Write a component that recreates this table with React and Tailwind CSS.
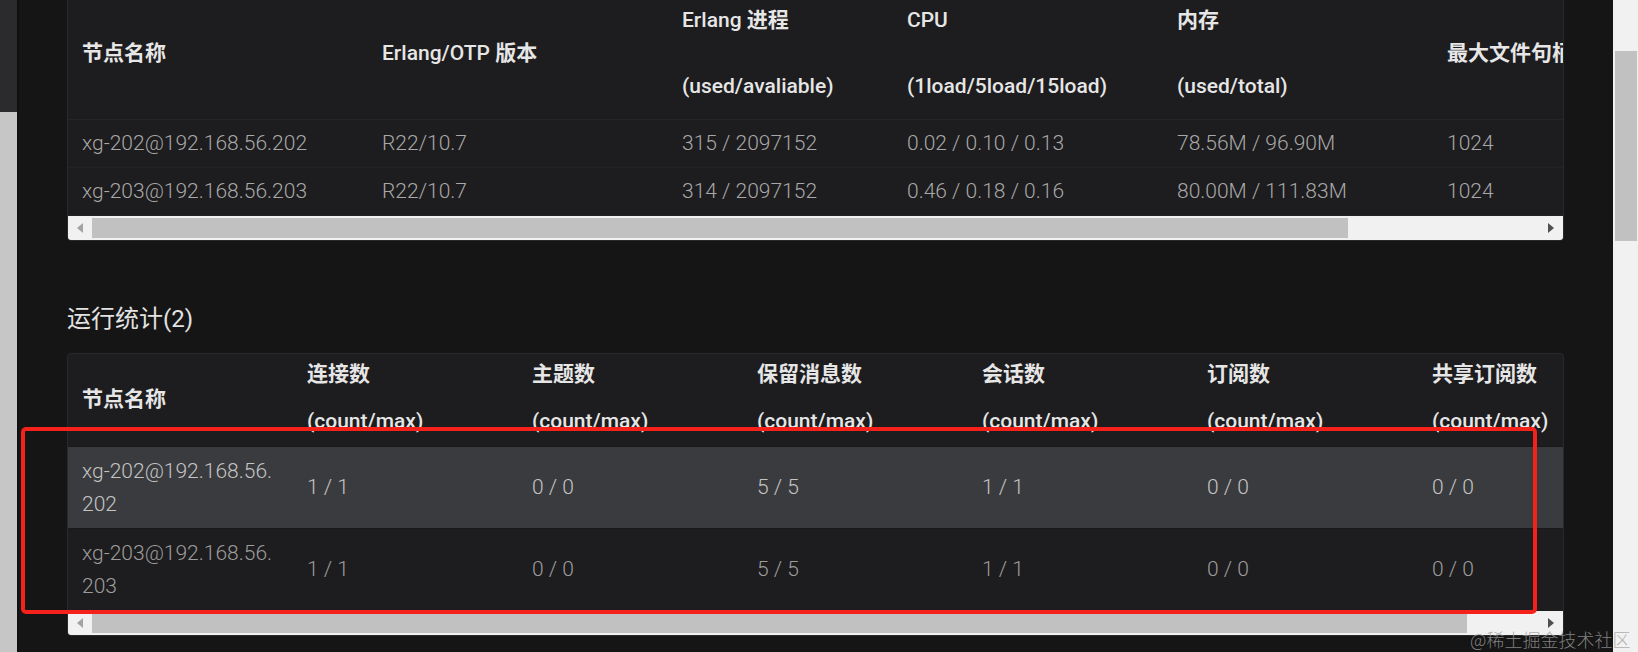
const font = "font-['Roboto','Noto_Sans_CJK_SC',sans-serif]";

function Cjk({ children }) {
  return <span className="font-bold">{children}</span>;
}

function Scrollbar({ thumb }) {
  return (
    <div className="flex h-[24px] items-center bg-[#f1f1f1]">
      <div className="flex w-[24px] shrink-0 justify-center">
        <span className="h-0 w-0 border-y-[5px] border-r-[6px] border-y-transparent border-r-[#a3a3a3]" />
      </div>
      <div className="min-w-0 flex-1">
        <div className={`h-[20px] bg-[#c1c1c1] ${thumb}`} />
      </div>
      <div className="flex w-[24px] shrink-0 justify-center">
        <span className="h-0 w-0 border-y-[5px] border-l-[6px] border-y-transparent border-l-[#505050]" />
      </div>
    </div>
  );
}

const nodes = [
  ['xg-202@192.168.56.202', 'R22/10.7', '315 / 2097152', '0.02 / 0.10 / 0.13', '78.56M / 96.90M', '1024'],
  ['xg-203@192.168.56.203', 'R22/10.7', '314 / 2097152', '0.46 / 0.18 / 0.16', '80.00M / 111.83M', '1024'],
];

const stats = [
  ['xg-202@192.168.56.202', '1 / 1', '0 / 0', '5 / 5', '1 / 1', '0 / 0', '0 / 0'],
  ['xg-203@192.168.56.203', '1 / 1', '0 / 0', '5 / 5', '1 / 1', '0 / 0', '0 / 0'],
];

function NodesCard() {
  const widths = ['w-[300px]', 'w-[300px]', 'w-[225px]', 'w-[270px]', 'w-[270px]', 'w-[361px]'];
  return (
    <div className="mt-[-12px] overflow-hidden rounded-[4px] border border-[#29292b] bg-[#1d1c1e]">
      <div className="overflow-hidden">
        <table className="w-[1726px] table-fixed border-collapse text-left text-[21px]">
          <colgroup>
            {widths.map((w, i) => (
              <col key={i} className={w} />
            ))}
          </colgroup>
          <thead>
            <tr className="h-[130px] border-b border-[#252427] text-[#e6e6e6]">
              <th className="pl-[14px] align-middle font-medium leading-[33px]"><Cjk>节点名称</Cjk></th>
              <th className="pl-[14px] align-middle font-medium leading-[33px]">Erlang/OTP <Cjk>版本</Cjk></th>
              <th className="pl-[14px] align-middle font-medium leading-[33px]">
                <div>Erlang <Cjk>进程</Cjk></div>
                <div className="mt-[33px]">(used/avaliable)</div>
              </th>
              <th className="pl-[14px] align-middle font-medium leading-[33px]">
                <div>CPU</div>
                <div className="mt-[33px]">(1load/5load/15load)</div>
              </th>
              <th className="pl-[14px] align-middle font-medium leading-[33px]">
                <div><Cjk>内存</Cjk></div>
                <div className="mt-[33px]">(used/total)</div>
              </th>
              <th className="whitespace-nowrap pl-[14px] align-middle font-medium leading-[33px]"><Cjk>最大文件句柄数</Cjk></th>
            </tr>
          </thead>
          <tbody>
            {nodes.map((row) => (
              <tr key={row[0]} className="h-[48px] border-b border-[#232225] font-light text-[#a8a8a8]">
                {row.map((c, i) => (
                  <td key={i} className="pl-[14px] leading-[33px]">{c}</td>
                ))}
              </tr>
            ))}
          </tbody>
        </table>
      </div>
      <Scrollbar thumb="w-[1256px]" />
    </div>
  );
}

function StatsCard() {
  const heads = ['连接数', '主题数', '保留消息数', '会话数', '订阅数', '共享订阅数'];
  return (
    <div className="mt-[18px] overflow-hidden rounded-[4px] border border-[#29292b] bg-[#1d1c1e]">
      <div className="overflow-hidden">
        <table className="w-[1575px] table-fixed border-collapse text-left text-[21px]">
          <colgroup>
            {[0, 1, 2, 3, 4, 5, 6].map((i) => (
              <col key={i} className="w-[225px]" />
            ))}
          </colgroup>
          <thead>
            <tr className="h-[93px] text-[#e6e6e6]">
              <th className="pl-[14px] align-middle font-medium leading-[33px]"><Cjk>节点名称</Cjk></th>
              {heads.map((h) => (
                <th key={h} className="pl-[14px] pt-[4px] align-top font-medium leading-[33px]">
                  <div><Cjk>{h}</Cjk></div>
                  <div className="mt-[14px]">(count/max)</div>
                </th>
              ))}
            </tr>
          </thead>
          <tbody>
            {stats.map((row, r) => (
              <tr
                key={row[0]}
                className={`h-[82px] border-t border-[#19181a] font-light ${r === 0 ? 'bg-[#3a3b3e] text-[#c4c4c4]' : 'text-[#9d9d9d]'}`}
              >
                <td className="pl-[14px] leading-[33px]">
                  <div className="w-[195px] break-all">{row[0]}</div>
                </td>
                {row.slice(1).map((c, i) => (
                  <td key={i} className="pl-[14px] leading-[33px]">{c}</td>
                ))}
              </tr>
            ))}
          </tbody>
        </table>
      </div>
      <Scrollbar thumb="w-[1375px]" />
    </div>
  );
}

export default function App() {
  return (
    <div className={`relative flex h-[652px] w-[1638px] overflow-hidden bg-[#151515] ${font}`}>
      <div className="flex w-[17px] shrink-0 flex-col">
        <div className="h-[112px] bg-[#2b2b2d]" />
        <div className="flex-1 bg-[#c6c6c6]" />
      </div>
      <div className="w-[2px] shrink-0 bg-[#101010]" />
      <main className="min-w-0 flex-1 pl-[48px] pr-[49px]">
        <NodesCard />
        <h2 className="mt-[60px] text-[24px] leading-[32px] text-[#e2e2e2]">
          <span className="font-['Noto_Sans_CJK_SC',sans-serif]">运行统计</span>(2)
        </h2>
        <StatsCard />
      </main>
      <div className="w-[25px] shrink-0 bg-[#f1f1f1] pt-[51px]">
        <div className="ml-[2px] h-[190px] w-[22px] bg-[#c1c1c1]" />
      </div>

      <div className="pointer-events-none absolute left-[21px] top-[427px] h-[187px] w-[1516px] rounded-[5px] border-[4px] border-[#f5211b]" />
      <div className="pointer-events-none absolute left-[1470px] top-[626px] font-['Noto_Sans_CJK_SC',sans-serif] text-[18px] font-light leading-[26px] text-[#9c9c9c]/80">
        @稀土掘金技术社区
      </div>
    </div>
  );
}
